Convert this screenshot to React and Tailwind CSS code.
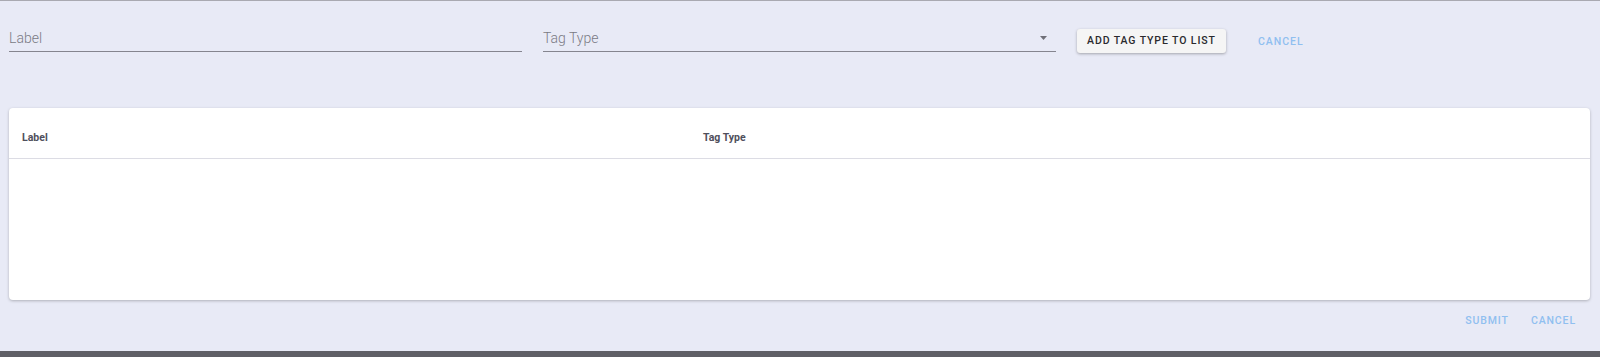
export default function App() {
  const font = { fontFamily: 'Roboto, "Noto Sans", Arial, sans-serif' };
  return (
    <div className="w-[1600px] h-[357px] bg-[#5f5f66] flex flex-col overflow-hidden" style={font}>
      <div className="h-px bg-[#a9a9b1] shrink-0" />
      <div className="h-[350px] bg-[#e8eaf6] flex flex-col shrink-0">
        <div className="flex items-start h-[25px] pl-[9px] mt-[26px]">
          <div className="w-[513px] border-b border-[#85858f] pt-[1px] pb-[3px]">
            <div className="text-[14px] leading-5 text-[#7a7a84] font-light">Label</div>
          </div>
          <div className="w-[513px] ml-[21px] border-b border-[#85858f] pt-[1px] pb-[3px] flex items-center justify-between">
            <div className="text-[14px] leading-5 text-[#7a7a84] font-light">Tag Type</div>
            <svg width="7" height="4" viewBox="0 0 7 4" className="mr-[9px]">
              <path d="M0 0 L7 0 L3.5 4 Z" fill="#6f6f78" />
            </svg>
          </div>
          <div className="ml-[21px] w-[149px] h-[24px] mt-[2px] shrink-0 bg-[#f5f5f5] rounded-[3px] shadow-[0_1px_3px_rgba(0,0,0,0.3)] flex items-center justify-center text-[10.5px] font-medium tracking-[0.9px] text-[#2a2a2e]">
            ADD TAG TYPE TO LIST
          </div>
          <div className="ml-[32px] mt-[9px] leading-[12px] text-[10.5px] font-medium tracking-[1px] text-[#90bff0]">CANCEL</div>
        </div>
        <div className="mt-[56px] ml-[9px] mr-[10px] h-[192px] bg-white rounded-[4px] shadow-[0_1px_3px_rgba(0,0,0,0.25)]">
          <div className="flex items-center pl-[13px] pt-[24px] pb-[14px] border-b border-[#dcdce4] text-[10.5px] leading-[12px] font-bold text-[#4f4f5c]">
            <div className="w-[681px]">Label</div>
            <div>Tag Type</div>
          </div>
        </div>
        <div className="flex justify-end mt-[13px] mr-[24px] text-[10.5px] font-medium tracking-[0.9px] text-[#90bff0]">
          <div>SUBMIT</div>
          <div className="ml-[22px]">CANCEL</div>
        </div>
      </div>
    </div>
  );
}
